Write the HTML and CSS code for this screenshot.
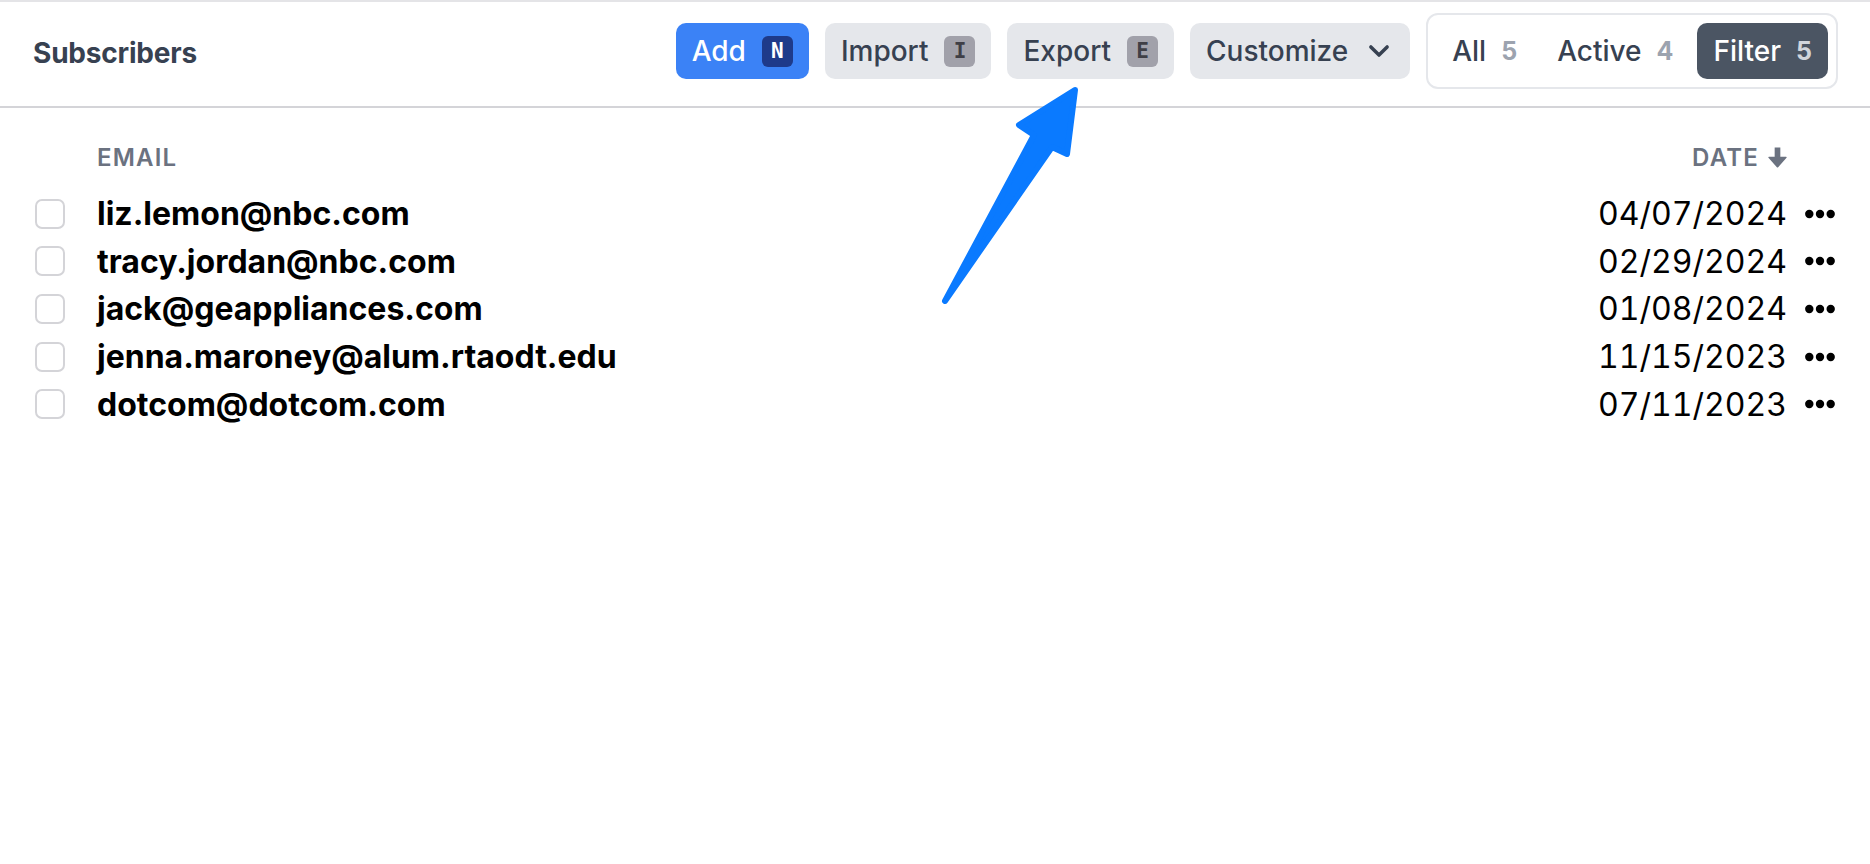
FILE: index.html
```html
<!DOCTYPE html>
<html lang="en">
<head>
<meta charset="utf-8">
<title>Subscribers</title>
<link rel="stylesheet" href="styles.css">
</head>
<body>
<div class="page">
  <header class="topbar">
    <h1 class="title">Subscribers</h1>
    <div class="actions">
      <button class="btn btn-primary">Add <kbd class="key key-dark">N</kbd></button>
      <button class="btn">Import <kbd class="key">I</kbd></button>
      <button class="btn">Export <kbd class="key">E</kbd></button>
      <button class="btn">Customize
        <svg class="chev" viewBox="0 0 24 24" fill="none" stroke="currentColor" stroke-width="2.8" stroke-linecap="round" stroke-linejoin="round"><path d="M18.5 8.75l-6.5 6.5-6.5-6.5"/></svg>
      </button>
      <div class="tabs">
        <button class="tab">All <span class="count">5</span></button>
        <button class="tab">Active <span class="count">4</span></button>
        <button class="tab tab-on">Filter <span class="count">5</span></button>
      </div>
    </div>
  </header>

  <div class="list">
    <div class="row row-head">
      <span></span>
      <span class="col-label">Email</span>
      <span class="col-label col-date">Date
        <svg class="sort" viewBox="0 0 18 20"><path d="M6.3 0.5h5.4v8.7h5.4c.6 0 .9.7.5 1.1L9.6 19.3a.8.8 0 0 1-1.2 0L.4 10.3c-.4-.4-.1-1.1.5-1.1h5.4z" fill="currentColor"/></svg>
      </span>
      <span></span>
    </div>
    <div class="row"><span class="check"></span><span class="email">liz.lemon@nbc.com</span><span class="date">04/07/2024</span><svg class="more" viewBox="0 0 30 10"><circle cx="4.3" cy="5" r="4.2"/><circle cx="15" cy="5" r="4.2"/><circle cx="25.7" cy="5" r="4.2"/></svg></div>
    <div class="row"><span class="check"></span><span class="email">tracy.jordan@nbc.com</span><span class="date">02/29/2024</span><svg class="more" viewBox="0 0 30 10"><circle cx="4.3" cy="5" r="4.2"/><circle cx="15" cy="5" r="4.2"/><circle cx="25.7" cy="5" r="4.2"/></svg></div>
    <div class="row"><span class="check"></span><span class="email">jack@geappliances.com</span><span class="date">01/08/2024</span><svg class="more" viewBox="0 0 30 10"><circle cx="4.3" cy="5" r="4.2"/><circle cx="15" cy="5" r="4.2"/><circle cx="25.7" cy="5" r="4.2"/></svg></div>
    <div class="row"><span class="check"></span><span class="email">jenna.maroney@alum.rtaodt.edu</span><span class="date">11/15/2023</span><svg class="more" viewBox="0 0 30 10"><circle cx="4.3" cy="5" r="4.2"/><circle cx="15" cy="5" r="4.2"/><circle cx="25.7" cy="5" r="4.2"/></svg></div>
    <div class="row"><span class="check"></span><span class="email">dotcom@dotcom.com</span><span class="date">07/11/2023</span><svg class="more" viewBox="0 0 30 10"><circle cx="4.3" cy="5" r="4.2"/><circle cx="15" cy="5" r="4.2"/><circle cx="25.7" cy="5" r="4.2"/></svg></div>
  </div>
</div>

<svg class="annotation" viewBox="0 0 1870 864" width="1870" height="864">
  <path d="M1075 88 L1019 123 L1034 133 L945 299 L1052 145 L1067 152 Z" fill="#0a7aff" stroke="#0a7aff" stroke-width="6" stroke-linejoin="round"/>
</svg>
</body>
</html>
```

FILE: styles.css
```css
* { box-sizing: border-box; }

html, body { margin: 0; padding: 0; background: #fff; }

body {
  font-family: Inter, "Noto Sans", sans-serif;
  color: #000;
  border-top: 2px solid #e4e4e7;
  min-height: 864px;
  position: relative;
}

.topbar {
  display: flex;
  align-items: center;
  justify-content: space-between;
  height: 106px;
  padding: 10px 32px 16px 32px;
  border-bottom: 2px solid #d4d4d8;
}

.title {
  margin: 4px 0 0 1px;
  font-size: 28px;
  font-weight: 700;
  color: #374151;
  letter-spacing: -0.2px;
}

.actions {
  display: flex;
  align-items: center;
  gap: 16px;
}

.btn {
  display: flex;
  align-items: center;
  gap: 16px;
  height: 56px;
  padding: 0 16px;
  border: 0;
  border-radius: 10px;
  background: #e5e7eb;
  color: #374151;
  font-family: inherit;
  font-size: 28px;
  font-weight: 500;
}

.btn-primary {
  background: #3b82f6;
  color: #fff;
}

.key {
  display: inline-flex;
  align-items: center;
  justify-content: center;
  width: 31px;
  height: 31px;
  border-radius: 6px;
  background: #a1a1aa;
  color: #3f3f46;
  font-family: "DejaVu Sans Mono", "Liberation Mono", monospace;
  font-size: 21px;
  font-weight: 700;
}

.key-dark {
  background: #1e3a8a;
  color: #fff;
}

.chev {
  width: 30px;
  height: 30px;
}

.tabs {
  display: flex;
  align-items: center;
  gap: 8px;
  padding: 8px;
  border: 2px solid #e5e7eb;
  border-radius: 12px;
}

.tab {
  display: flex;
  align-items: center;
  gap: 15px;
  height: 56px;
  padding: 0 16px;
  border: 0;
  border-radius: 10px;
  background: transparent;
  color: #374151;
  font-family: inherit;
  font-size: 28px;
  font-weight: 500;
}

.count {
  font-size: 25px;
  font-weight: 700;
  color: #9ca3af;
}

.tab-on {
  background: #4b5563;
  color: #fff;
}

.tab-on .count { color: #d1d5db; }

.list {
  padding: 33px 35px 0 35px;
}

.row {
  display: grid;
  grid-template-columns: 30px 1fr auto 30px;
  column-gap: 32px;
  align-items: center;
  height: 47.6px;
}

.row > :nth-child(3) { margin-right: -14px; }

.row-head {
  height: 32px;
  margin-bottom: 17px;
}

.col-label {
  font-size: 24px;
  font-weight: 600;
  text-transform: uppercase;
  letter-spacing: 1.2px;
  color: #6b7280;
}

.col-date {
  display: flex;
  align-items: center;
  gap: 9px;
  justify-self: end;
}

.sort {
  width: 19px;
  height: 21px;
}

.check {
  width: 30px;
  height: 30px;
  border: 2px solid #d4d4d8;
  border-radius: 7px;
  background: #fff;
}

.email {
  font-size: 32px;
  font-weight: 700;
}

.date {
  font-size: 32px;
  font-weight: 400;
  font-variant-numeric: tabular-nums;
  text-align: right;
}

.more {
  width: 30px;
  height: 10px;
  fill: #000;
}

.annotation {
  position: absolute;
  top: 0;
  left: 0;
  pointer-events: none;
}
```
